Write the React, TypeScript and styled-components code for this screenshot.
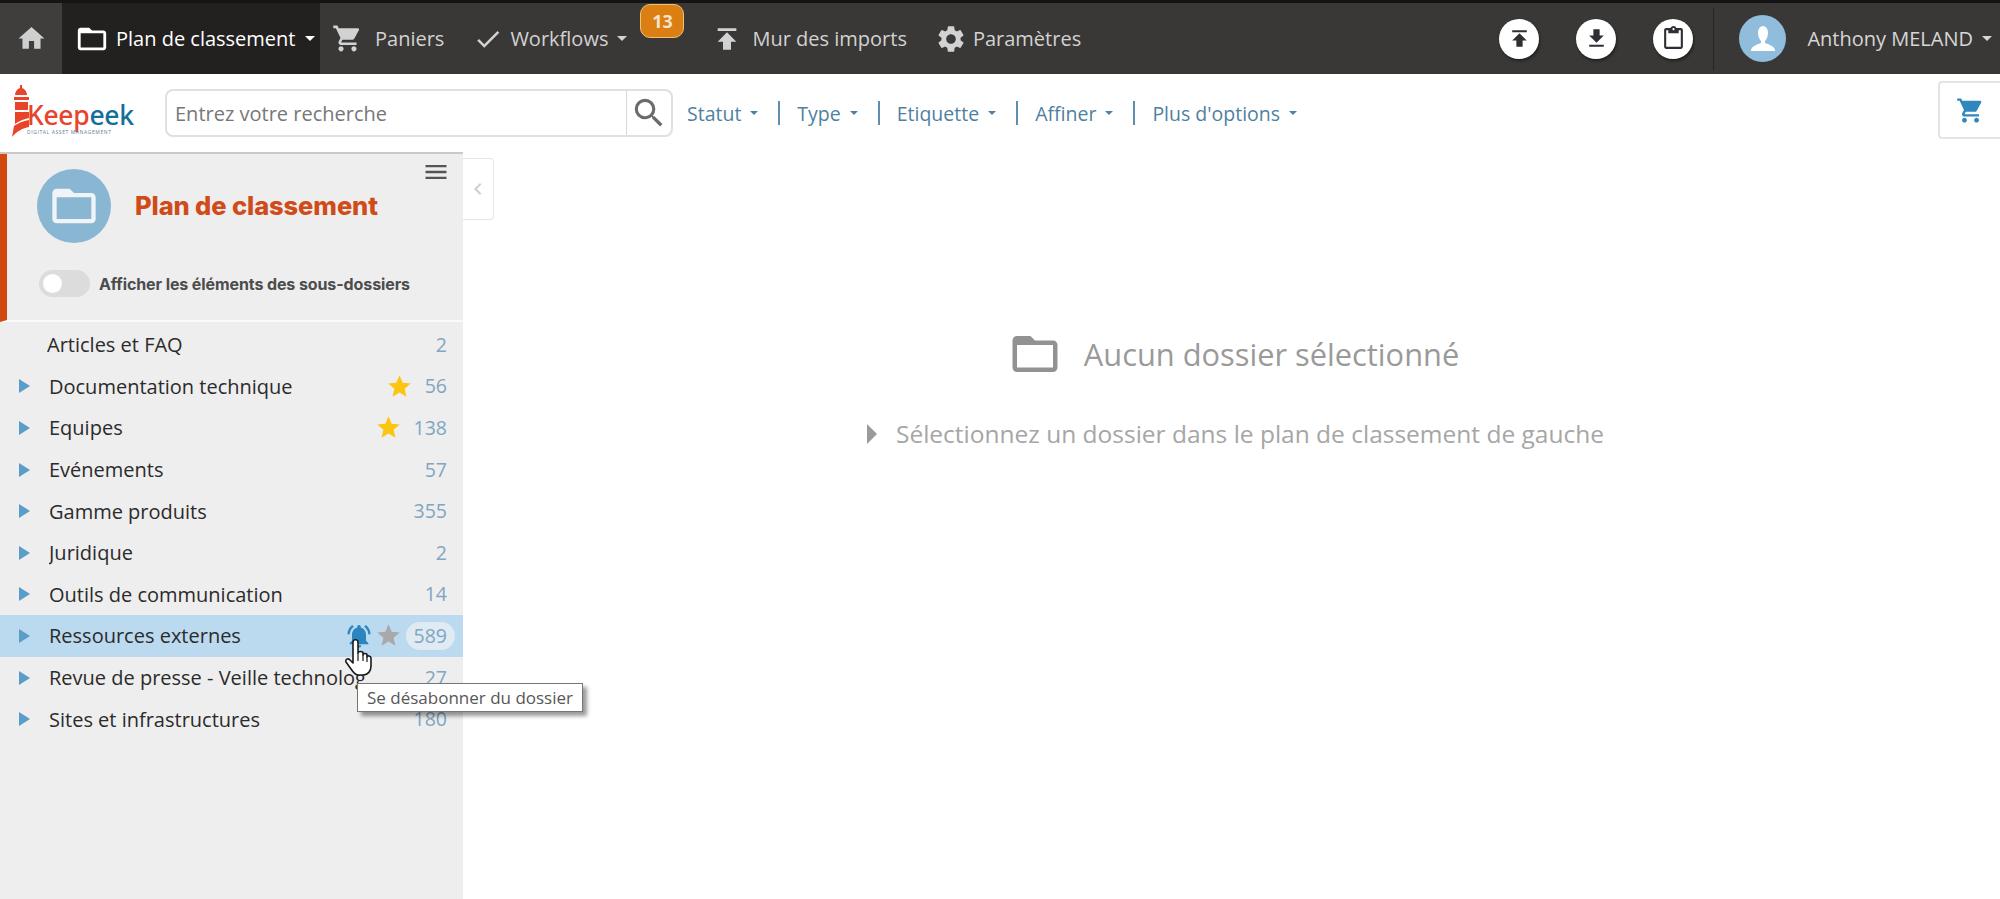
import React from 'react';
import styled, { createGlobalStyle } from 'styled-components';
import {
  MdHome,
  MdFolderOpen,
  MdShoppingCart,
  MdCheck,
  MdPublish,
  MdSettings,
  MdGetApp,
  MdOutlineContentPaste,
  MdSearch,
  MdMenu,
  MdChevronLeft,
  MdStar,
  MdNotificationsActive,
} from 'react-icons/md';

const GlobalStyle = createGlobalStyle`
  html, body {
    margin: 0;
    padding: 0;
    height: 100%;
    overflow: hidden;
    background: #fff;
    font-family: 'Open Sans', 'Liberation Sans', sans-serif;
  }
`;

const Page = styled.div`
  position: relative;
  display: flex;
  flex-direction: column;
  width: 2000px;
  height: 899px;
  overflow: hidden;
`;

const TopBar = styled.header`
  display: flex;
  align-items: stretch;
  height: 71px;
  flex-shrink: 0;
  background: #3a3836;
  border-top: 3px solid #141414;
  color: #d6d6d6;
  font-size: 20px;
`;

const HomeCell = styled.div`
  display: flex;
  align-items: center;
  justify-content: center;
  width: 62px;
  color: #cfcfcf;
  background: #403e3c;
  font-size: 31px;
`;

const NavItem = styled.div<{ $active?: boolean; $left?: number; $gap?: number }>`
  display: flex;
  align-items: center;
  gap: ${({ $gap }) => $gap ?? 8}px;
  margin-left: ${({ $left }) => $left ?? 0}px;
  padding: ${({ $active }) => ($active ? '0 5px 0 13px' : '0')};
  width: ${({ $active }) => ($active ? '258px' : 'auto')};
  box-sizing: border-box;
  background: ${({ $active }) => ($active ? '#222120' : 'transparent')};
  color: ${({ $active }) => ($active ? '#ffffff' : '#d2d2d2')};
  white-space: nowrap;

  svg {
    flex-shrink: 0;
  }
`;

const Caret = styled.span<{ $color?: string; $size?: number }>`
  display: inline-block;
  width: 0;
  height: 0;
  margin-left: ${({ $size }) => ($size ? 9 : 2)}px;
  border-left: ${({ $size }) => $size ?? 5}px solid transparent;
  border-right: ${({ $size }) => $size ?? 5}px solid transparent;
  border-top: ${({ $size }) => $size ?? 5}px solid ${({ $color }) => $color ?? 'currentColor'};
`;

const Badge = styled.span`
  align-self: flex-start;
  display: flex;
  align-items: center;
  justify-content: center;
  width: 44px;
  height: 34px;
  margin: 1px 0 0 13px;
  box-sizing: border-box;
  border: 1px solid #f0c078;
  border-radius: 10px;
  background: #db7f12;
  color: #f3e4cf;
  font-size: 18px;
  font-weight: 700;
`;

const RightCluster = styled.div`
  display: flex;
  align-items: center;
  margin-left: auto;
  height: 100%;
`;

const RoundButton = styled.div`
  display: flex;
  align-items: center;
  justify-content: center;
  width: 40px;
  height: 40px;
  margin-left: 37px;
  border-radius: 50%;
  background: #fff;
  color: #2f2f33;
  font-size: 25px;
  box-shadow: 1px 2px 3px rgba(0, 0, 0, 0.45);

  &:first-child {
    margin-left: 0;
  }
`;

const Divider = styled.div`
  width: 1px;
  height: 62px;
  margin: 0 25px 0 20px;
  background: #262524;
`;

const Avatar = styled.div`
  display: flex;
  align-items: center;
  justify-content: center;
  width: 47px;
  height: 47px;
  border-radius: 50%;
  background: #8fbddb;
`;

const UserName = styled.span`
  margin-left: 21px;
  color: #d6d6d6;
  font-size: 20px;
  white-space: nowrap;
`;

const UserCaret = styled(Caret)`
  margin: 0 8px 0 9px;
`;

const SearchRow = styled.div`
  display: flex;
  align-items: center;
  height: 78px;
  flex-shrink: 0;
  background: #fff;
`;

const Logo = styled.div`
  display: flex;
  align-items: flex-start;
  width: 165px;
  height: 56px;
  padding-left: 11px;
  box-sizing: border-box;
`;

const LogoWords = styled.div`
  display: flex;
  flex-direction: column;
  margin: 15px 0 0 -8px;
`;

const LogoName = styled.div`
  font-size: 26.5px;
  line-height: 30px;
  letter-spacing: -0.3px;
  font-weight: 500;
  color: #e8432b;
  font-family: 'Noto Sans', sans-serif;
`;

const LogoBlue = styled.span`
  color: #136f96;
`;

const LogoTag = styled.div`
  margin-top: -1px;
  font-size: 5px;
  line-height: 6px;
  letter-spacing: 0.6px;
  color: #5c7f9c;
  white-space: nowrap;
`;

const SearchBox = styled.div`
  display: flex;
  align-items: stretch;
  width: 508px;
  height: 48px;
  box-sizing: border-box;
  border: 2px solid #e0e0e0;
  border-radius: 8px;
  background: #fff;
`;

const SearchInput = styled.input`
  flex: 1;
  min-width: 0;
  border: 0;
  outline: 0;
  padding: 0 8px;
  background: transparent;
  font-family: inherit;
  font-size: 20px;
  color: #555;

  &::placeholder {
    color: #777;
    opacity: 1;
  }
`;

const SearchButton = styled.div`
  display: flex;
  align-items: center;
  justify-content: center;
  width: 44px;
  border-left: 1px solid #d8d8d8;
  color: #6b6b6b;
  font-size: 38px;
`;

const Filters = styled.div`
  display: flex;
  align-items: center;
  margin-left: 14px;
`;

const FilterItem = styled.div`
  display: flex;
  align-items: center;
  height: 24px;
  color: #4f7fa1;
  font-size: 19.5px;
  white-space: nowrap;
  padding-right: 20px;
  margin-right: 17px;
  border-right: 2px solid #5f8fb0;

  &:last-child {
    border-right: 0;
  }
`;

const CartTab = styled.div`
  display: flex;
  align-items: center;
  justify-content: center;
  width: 62px;
  height: 58px;
  margin: 0 0 6px auto;
  box-sizing: border-box;
  border: 2px solid #e4e4e4;
  border-right: 0;
  border-radius: 4px 0 0 4px;
  color: #2f87bd;
  font-size: 29px;
`;

const Body = styled.div`
  display: flex;
  flex: 1;
  min-height: 0;
`;

const Sidebar = styled.aside`
  display: flex;
  flex-direction: column;
  width: 463px;
  flex-shrink: 0;
  background: #eeeeee;
  border-top: 2px solid #c9c9c9;
  box-sizing: border-box;
`;

const SideHeader = styled.div`
  position: relative;
  display: flex;
  flex-direction: column;
  height: 168px;
  flex-shrink: 0;
  box-sizing: border-box;
  padding: 15px 0 0 30px;
  border-left: 7px solid #d2490f;
  border-bottom: 2px solid #fafafa;
`;

const TitleRow = styled.div`
  display: flex;
  align-items: center;
`;

const FolderCircle = styled.div`
  display: flex;
  align-items: center;
  justify-content: center;
  width: 74px;
  height: 74px;
  border-radius: 50%;
  background: #88b6d3;
  color: #f0f4f7;
  font-size: 52px;
`;

const SideTitle = styled.h1`
  margin: 0 0 1px 24px;
  color: #cf4c1a;
  font-family: 'Inter', sans-serif;
  font-size: 25.5px;
  font-weight: 800;
  letter-spacing: -0.1px;
`;

const MenuButton = styled.div`
  position: absolute;
  top: 4px;
  right: 13px;
  display: flex;
  color: #555;
  font-size: 28px;
`;

const ToggleRow = styled.div`
  display: flex;
  align-items: center;
  margin: 27px 0 0 2px;
`;

const Toggle = styled.div`
  display: flex;
  align-items: center;
  width: 51px;
  height: 27px;
  padding-left: 4px;
  box-sizing: border-box;
  border-radius: 14px;
  background: #dcdcdc;
`;

const ToggleKnob = styled.div`
  width: 19px;
  height: 19px;
  border-radius: 50%;
  background: #fff;
`;

const ToggleLabel = styled.span`
  margin-left: 9px;
  color: #4c4c4c;
  font-family: 'Inter', sans-serif;
  font-size: 16px;
  font-weight: 700;
  letter-spacing: -0.1px;
  white-space: nowrap;
`;

const Tree = styled.div`
  padding-top: 2px;
`;

const Row = styled.div<{ $selected?: boolean }>`
  display: flex;
  align-items: center;
  height: 41.6px;
  padding: 0 16px 0 19px;
  background: ${({ $selected }) => ($selected ? '#bbd9ef' : 'transparent')};
`;

const Arrow = styled.span<{ $hidden?: boolean }>`
  flex-shrink: 0;
  width: 0;
  height: 0;
  margin-right: 19px;
  border-top: 7px solid transparent;
  border-bottom: 7px solid transparent;
  border-left: 11px solid ${({ $hidden }) => ($hidden ? 'transparent' : '#5b9dc9')};
`;

const RowName = styled.span<{ $clip?: boolean; $leaf?: boolean }>`
  margin-left: ${({ $leaf }) => ($leaf ? '-2px' : '0')};
  max-width: ${({ $clip }) => ($clip ? '318px' : 'none')};
  overflow: hidden;
  color: #2b2b2b;
  font-size: 20px;
  white-space: nowrap;
`;

const RowEnd = styled.div`
  display: flex;
  align-items: center;
  margin-left: auto;
`;

const Count = styled.span<{ $pill?: boolean }>`
  color: #7fa6c2;
  font-size: 19.5px;
  line-height: 28px;
  ${({ $pill }) =>
    $pill &&
    `
    margin-right: -8px;
    padding: 0 8px;
    border-radius: 14px;
    background: #dfeaf3;
  `}
`;

const StarIcon = styled(MdStar)<{ $tone: 'gold' | 'grey' }>`
  margin-right: ${({ $tone }) => ($tone === 'gold' ? 12 : 4)}px;
  color: ${({ $tone }) => ($tone === 'gold' ? '#fbc512' : '#a9a9a9')};
  font-size: 27px;
`;

const BellIcon = styled(MdNotificationsActive)`
  margin-right: 2px;
  color: #2b86c0;
  font-size: 28px;
`;

const CollapseTab = styled.div`
  display: flex;
  align-items: center;
  justify-content: center;
  width: 31px;
  height: 62px;
  margin-top: 6px;
  box-sizing: border-box;
  flex-shrink: 0;
  border: 1px solid #e6e6e6;
  border-left: 0;
  border-radius: 0 4px 4px 0;
  color: #cfcfcf;
  font-size: 24px;
`;

const Main = styled.main`
  display: flex;
  flex: 1;
  flex-direction: column;
  align-items: center;
  margin-left: -23px;
  padding-top: 175px;
`;

const EmptyTitle = styled.div`
  display: flex;
  align-items: center;
  gap: 22px;
  color: #9a9a9a;
  font-size: 30.8px;
  font-weight: 400;
`;

const EmptyFolder = styled(MdFolderOpen)`
  margin: 0 0 0 -4px;
  color: #929292;
  font-size: 54px;
`;

const EmptyHint = styled.div`
  display: flex;
  align-items: center;
  gap: 19px;
  margin-top: 36px;
  color: #a6a6a6;
  font-size: 24.5px;
  white-space: nowrap;
`;

const HintArrow = styled.span`
  width: 0;
  height: 0;
  border-top: 10px solid transparent;
  border-bottom: 10px solid transparent;
  border-left: 10px solid #9a9a9a;
`;

const Tooltip = styled.div`
  position: absolute;
  left: 357px;
  top: 683px;
  width: 226px;
  height: 29px;
  box-sizing: border-box;
  display: flex;
  align-items: center;
  justify-content: center;
  border: 1px solid #767676;
  background: #fff;
  color: #575757;
  font-size: 17px;
  white-space: nowrap;
  box-shadow: 4px 4px 4px rgba(0, 0, 0, 0.4);
`;

const HandCursor = styled.svg`
  position: absolute;
  left: 344px;
  top: 639px;
  width: 30px;
  height: 38px;
`;

const tree = [
  { name: 'Articles et FAQ', count: 2, leaf: true },
  { name: 'Documentation technique', count: 56, star: true },
  { name: 'Equipes', count: 138, star: true },
  { name: 'Evénements', count: 57 },
  { name: 'Gamme produits', count: 355 },
  { name: 'Juridique', count: 2 },
  { name: 'Outils de communication', count: 14 },
  { name: 'Ressources externes', count: 589, selected: true },
  { name: 'Revue de presse - Veille technologique', count: 27, clip: true },
  { name: 'Sites et infrastructures', count: 180 },
];

const filters = ['Statut', 'Type', 'Etiquette', 'Affiner', "Plus d'options"];

function Lighthouse() {
  return (
    <svg width="24" height="54" viewBox="0 0 24 54" fill="#e8432b">
      <path d="M9 0h2v3c3 1 5 4 5 7H4c0-3 2-6 5-7z" />
      <path d="M3 12h15v3H3z" />
      <path d="M4 17h13v8H4z" />
      <path d="M4 27h14v6c-5 1-10 3-14 6z" />
      <path d="M18 35v7c-6 1-12 4-17 10l2-11c4-3 9-5 15-6z" />
    </svg>
  );
}

export default function App() {
  return (
    <Page>
      <GlobalStyle />
      <TopBar>
        <HomeCell>
          <MdHome />
        </HomeCell>
        <NavItem $active $gap={7}>
          <MdFolderOpen size={34} />
          <span>Plan de classement</span>
          <Caret />
        </NavItem>
        <NavItem $left={12} $gap={12}>
          <MdShoppingCart size={31} />
          <span>Paniers</span>
        </NavItem>
        <NavItem $left={29} $gap={7}>
          <MdCheck size={30} />
          <span>Workflows</span>
          <Caret />
        </NavItem>
        <Badge>13</Badge>
        <NavItem $left={27} $gap={9}>
          <MdPublish size={32} />
          <span>Mur des imports</span>
        </NavItem>
        <NavItem $left={28} $gap={6}>
          <MdSettings size={32} />
          <span>Paramètres</span>
        </NavItem>
        <RightCluster>
          <RoundButton>
            <MdPublish />
          </RoundButton>
          <RoundButton>
            <MdGetApp />
          </RoundButton>
          <RoundButton>
            <MdOutlineContentPaste />
          </RoundButton>
          <Divider />
          <Avatar>
            <svg width="30" height="30" viewBox="0 0 30 30" fill="#fff">
              <path d="M15 2c3 0 5 3 5 7s-2 7-3 8v2c3 1 9 3 10 7v1H3v-1c1-4 7-6 10-7v-2c-1-1-3-4-3-8s2-7 5-7z" />
            </svg>
          </Avatar>
          <UserName>Anthony MELAND</UserName>
          <UserCaret />
        </RightCluster>
      </TopBar>

      <SearchRow>
        <Logo>
          <Lighthouse />
          <LogoWords>
            <LogoName>
              Keep<LogoBlue>eek</LogoBlue>
            </LogoName>
            <LogoTag>DIGITAL ASSET MANAGEMENT</LogoTag>
          </LogoWords>
        </Logo>
        <SearchBox>
          <SearchInput placeholder="Entrez votre recherche" readOnly />
          <SearchButton>
            <MdSearch />
          </SearchButton>
        </SearchBox>
        <Filters>
          {filters.map((filter) => (
            <FilterItem key={filter}>
              {filter}
              <Caret $size={4} />
            </FilterItem>
          ))}
        </Filters>
        <CartTab>
          <MdShoppingCart />
        </CartTab>
      </SearchRow>

      <Body>
        <Sidebar>
          <SideHeader>
            <MenuButton>
              <MdMenu />
            </MenuButton>
            <TitleRow>
              <FolderCircle>
                <MdFolderOpen />
              </FolderCircle>
              <SideTitle>Plan de classement</SideTitle>
            </TitleRow>
            <ToggleRow>
              <Toggle>
                <ToggleKnob />
              </Toggle>
              <ToggleLabel>Afficher les éléments des sous-dossiers</ToggleLabel>
            </ToggleRow>
          </SideHeader>
          <Tree>
            {tree.map((item) => (
              <Row key={item.name} $selected={item.selected}>
                <Arrow $hidden={item.leaf} />
                <RowName $clip={item.clip} $leaf={item.leaf}>
                  {item.name}
                </RowName>
                <RowEnd>
                  {item.selected && <BellIcon />}
                  {(item.star || item.selected) && (
                    <StarIcon $tone={item.selected ? 'grey' : 'gold'} />
                  )}
                  <Count $pill={item.selected}>{item.count}</Count>
                </RowEnd>
              </Row>
            ))}
          </Tree>
        </Sidebar>
        <CollapseTab>
          <MdChevronLeft />
        </CollapseTab>
        <Main>
          <EmptyTitle>
            <EmptyFolder />
            <span>Aucun dossier sélectionné</span>
          </EmptyTitle>
          <EmptyHint>
            <HintArrow />
            <span>Sélectionnez un dossier dans le plan de classement de gauche</span>
          </EmptyHint>
        </Main>
      </Body>

      <Tooltip>Se désabonner du dossier</Tooltip>
      <HandCursor viewBox="0 0 30 38">
        <path
          d="M9 3c0-3 5-3 5 0v11c0-2 5-2 5 0v2c0-2 4-2 4 0v2c0-2 4-1 4 1v8c0 5-3 9-8 9h-5c-3 0-5-3-7-6l-5-7c-1-3 2-4 4-2l3 3z"
          fill="#fff"
          stroke="#1a1a1a"
          strokeWidth="1.6"
          strokeLinejoin="round"
        />
        <path d="M14 14v8M19 16v6M23 18v5" stroke="#1a1a1a" strokeWidth="1.2" />
      </HandCursor>
    </Page>
  );
}
